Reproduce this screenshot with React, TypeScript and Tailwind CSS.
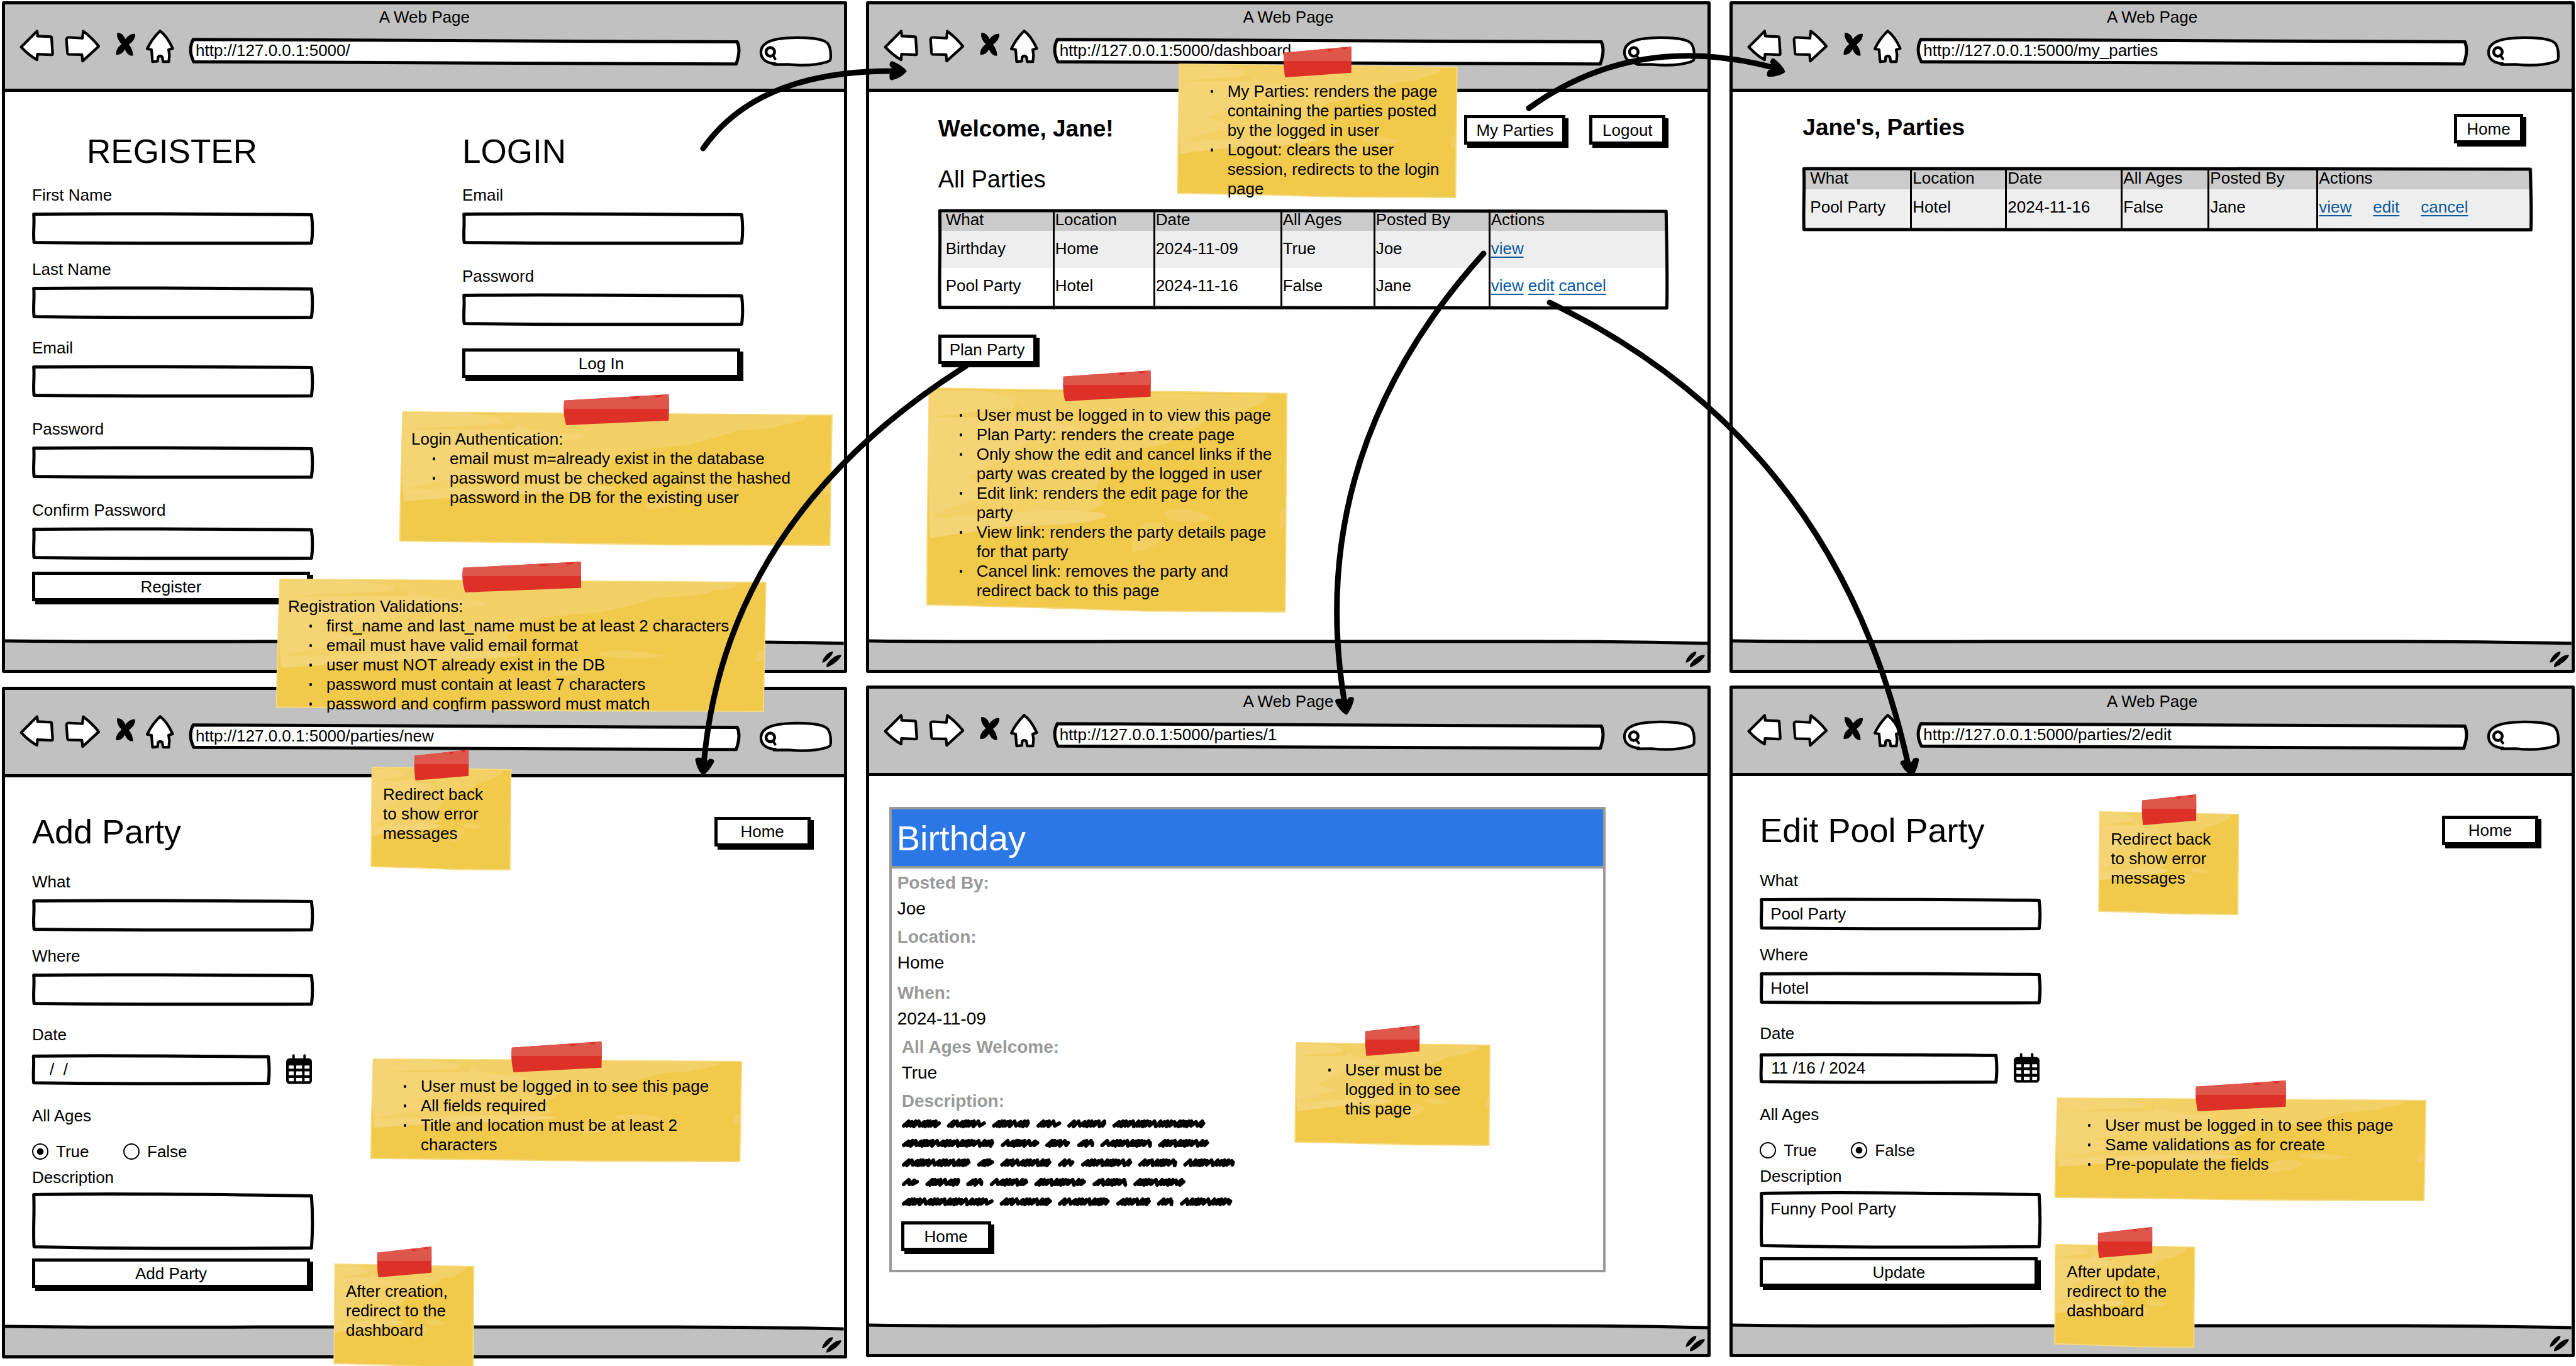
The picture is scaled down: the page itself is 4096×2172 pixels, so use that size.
import { ReactNode, useId } from "react";

/* ---------- hand-drawn outlines ---------- */

const outlineBase = "pointer-events-none absolute inset-0 h-full w-full overflow-visible";

function Outline() {
  return (
    <svg aria-hidden="true" viewBox="0 0 100 100" preserveAspectRatio="none" className={outlineBase}>
      <path
        d="M0.6 5 C30 2 70 5 99.4 7 C99.8 35 99.8 70 99.4 97 C70 98 40 99 0.7 95 C0.3 65 0.9 40 0.6 5Z"
        fill="none"
        stroke="#000"
        strokeWidth="5"
        strokeLinejoin="round"
        vectorEffect="non-scaling-stroke"
      />
    </svg>
  );
}

function TallOutline({ color }: { color: string }) {
  return (
    <svg aria-hidden="true" viewBox="0 0 100 100" preserveAspectRatio="none" className={outlineBase}>
      <path
        d="M0.2 1.2 C30 0.8 70 1.4 99.7 2 C99.8 35 99.9 70 99.8 98.6 C70 99.2 40 98.8 0.2 98 C0.1 65 0.3 40 0.2 1.2Z"
        fill="none"
        stroke={color}
        strokeWidth="5"
        strokeLinejoin="round"
        vectorEffect="non-scaling-stroke"
      />
    </svg>
  );
}

/* ---------- browser chrome ---------- */

function BackIcon() {
  return (
    <svg aria-hidden="true" viewBox="90 138 174 162" className="h-[53px] w-[57px]">
      <path d="M101 226 L178 149 Q181 160 181 173 L245 176 Q249 176 249 182 L254 258 Q254 264 248 264 L180 261 L178 288 Q140 268 101 226Z" fill="#fff" stroke="#000" strokeWidth="13" strokeLinejoin="round" />
    </svg>
  );
}

function ForwardIcon() {
  return (
    <svg aria-hidden="true" viewBox="312 138 180 168" className="h-[54px] w-[58px]">
      <path d="M323 190 Q324 179 338 180 L402 184 L406 149 Q450 182 483 224 L403 297 L400 265 L334 264 Q329 264 328 256Z" fill="#fff" stroke="#000" strokeWidth="13" strokeLinejoin="round" />
    </svg>
  );
}

function StopIcon() {
  return (
    <svg aria-hidden="true" viewBox="560 150 102 124" className="h-[40px] w-[33px]">
      <path d="M570 156 Q596 154 611 188 Q632 158 659 162 Q662 190 628 215 Q649 240 648 270 Q622 272 608 238 Q592 268 564 264 Q562 236 592 212 Q565 186 570 156Z" />
    </svg>
  );
}

function HomeIcon() {
  return (
    <svg aria-hidden="true" viewBox="708 134 144 170" className="h-[55px] w-[47px]">
      <path d="M780 144 Q815 170 842 230 L822 236 L826 262 L823 295 L795 295 L791 272 Q780 262 770 272 L768 293 L743 295 L738 236 L717 232 Q738 185 780 144Z" fill="#fff" stroke="#000" strokeWidth="13" strokeLinejoin="round" />
    </svg>
  );
}

function ResizeGrip() {
  return (
    <svg aria-hidden="true" viewBox="762 82 98 80" className="absolute top-[20px] right-[4px] h-[26px] w-[32px]">
      <path d="M765 139 Q768 122 782 106 Q798 87 816 85 Q824 90 804 113 Q778 142 765 139Z" />
      <path d="M787 161 Q782 148 808 124 Q838 98 860 102 Q856 118 832 137 Q802 160 787 161Z" />
    </svg>
  );
}

function BrowserWindow({ url, children, overlay }: { url: string; children?: ReactNode; overlay?: ReactNode }) {
  return (
    <section className="relative flex flex-1 flex-col rounded-[3px] border-[5px] border-black bg-white">
      <header className="h-[139px] border-b-[5px] border-black bg-[#c1c1c1] pt-[4px]">
        <p className="text-center leading-[32px]">A Web Page</p>
        <div className="flex items-start pt-[3px] pr-[18px] pl-[22px]">
          <button type="button" aria-label="Back"><BackIcon /></button>
          <button type="button" aria-label="Forward" className="ml-[15px]"><ForwardIcon /></button>
          <button type="button" aria-label="Stop" className="mt-[4px] ml-[23px]"><StopIcon /></button>
          <button type="button" aria-label="Home" className="ml-[15px]"><HomeIcon /></button>
          <div className="relative mt-[14px] ml-[24px] h-[44px] flex-1">
            <svg aria-hidden="true" viewBox="0 0 100 100" preserveAspectRatio="none" className={outlineBase}>
              <path d="M0.6 6 C30 5 60 12 99.5 15 Q100.2 45 99.3 95 C60 94 30 88 0.7 87 Q-0.4 45 0.6 6Z" fill="#fff" stroke="#000" strokeWidth="5" strokeLinejoin="round" vectorEffect="non-scaling-stroke" />
            </svg>
            <input type="text" aria-label="Address" defaultValue={url} className="relative block h-[40px] w-full bg-transparent pl-[9px] outline-none" />
          </div>
          <div className="relative mt-[11px] ml-[30px] h-[49px] w-[117px]">
            <svg aria-hidden="true" viewBox="458 422 360 150" preserveAspectRatio="none" className={outlineBase}>
              <path d="M538 558 C500 555 466 540 467 500 C469 450 530 432 640 431 C740 430 784 445 796 462 C806 478 810 500 808 530 C807 544 800 545 790 549 C720 570 650 566 600 561 L530 562" fill="#fff" stroke="#000" strokeWidth="13" strokeLinecap="round" strokeLinejoin="round" />
              <circle cx="513" cy="500" r="21" fill="none" stroke="#000" strokeWidth="14" />
              <path d="M526 518 L537 534" stroke="#000" strokeWidth="12" strokeLinecap="round" />
            </svg>
            <input type="search" aria-label="Search" className="relative block h-full w-full bg-transparent pr-3 pl-[32px] outline-none" />
          </div>
        </div>
      </header>
      <div className="flex-1">{children}</div>
      <footer className="relative h-[50px]">
        <svg aria-hidden="true" viewBox="0 0 100 50" preserveAspectRatio="none" className="absolute inset-0 h-full w-full">
          <path d="M0 4 H80 Q90 4 100 8 V50 H0Z" fill="#c1c1c1" />
          <path d="M0 4 Q10 6 30 5 H80 Q90 5 100 8" fill="none" stroke="#000" strokeWidth="5" vectorEffect="non-scaling-stroke" />
        </svg>
        <ResizeGrip />
      </footer>
      {overlay}
    </section>
  );
}

/* ---------- controls ---------- */

function Field({ label, value, className = "" }: { label: string; value?: string; className?: string }) {
  const id = useId();
  return (
    <div className={className}>
      <label htmlFor={id} className="block leading-[36px]">{label}</label>
      <div className="relative mt-[10px]">
        <Outline />
        <input id={id} type="text" defaultValue={value} className="relative block h-[50px] w-full bg-transparent pl-[17px] outline-none" />
      </div>
    </div>
  );
}

function Button({ children, className = "" }: { children: ReactNode; className?: string }) {
  return (
    <button type="button" className={`block h-[47px] border-[5px] border-black bg-white leading-[36px] shadow-[5px_5px_0_#000] ${className}`}>
      {children}
    </button>
  );
}

const radioClass =
  "h-[26px] w-[26px] appearance-none rounded-full border-2 border-black bg-white checked:bg-[radial-gradient(circle_closest-side,#000_44%,#fff_52%)]";

function CalendarIcon() {
  return (
    <svg aria-hidden="true" viewBox="1275 62 126 146" className="h-[48px] w-[41px]">
      <path d="M1311 68 V90 M1365 68 V90" stroke="#000" strokeWidth="12" strokeLinecap="round" />
      <rect x="1275" y="82" width="126" height="125" rx="16" />
      <path
        fill="#fff"
        d="M1288 117h24v16h-24z M1324 117h29v16h-29z M1365 117h24v16h-24z M1288 146h24v18h-24z M1324 146h29v18h-29z M1365 146h24v18h-24z M1288 178h24v16h-19q-5 0-5-5z M1324 178h29v16h-29z M1365 178h24v11q0 5-5 5h-19z"
      />
    </svg>
  );
}

type PartyFormProps = {
  title: string;
  what?: string;
  where?: string;
  date: string;
  dateClass: string;
  allAges: boolean;
  description?: string;
  submit: string;
};

function PartyForm({ title, what, where, date, dateClass, allAges, description, submit }: PartyFormProps) {
  const id = useId();
  return (
    <div className="pt-[56px] pr-[53px] pl-[43px]">
      <div className="flex h-[60px] items-center justify-between">
        <h1 className="text-[54px] leading-[60px]">{title}</h1>
        <Button className="w-[153px]">Home</Button>
      </div>
      <form className="mt-[32px] w-[447px]">
        <Field label="What" value={what} />
        <Field label="Where" value={where} className="mt-[22px]" />
        <label htmlFor={`${id}d`} className="mt-[29px] block leading-[36px]">Date</label>
        <div className="mt-[13px] flex items-center justify-between pr-[2px]">
          <div className="relative w-[378px]">
            <Outline />
            <input id={`${id}d`} type="text" defaultValue={date} className={`relative block h-[47px] w-full bg-transparent outline-none ${dateClass}`} />
          </div>
          <button type="button" aria-label="Pick a date"><CalendarIcon /></button>
        </div>
        <fieldset className="mt-[32px]">
          <legend className="leading-[36px]">All Ages</legend>
          <div className="mt-[21px] flex h-[36px] gap-[34px]">
            <label className="flex w-[111px] items-center gap-[12px]">
              <input type="radio" name={`${id}a`} defaultChecked={allAges} className={radioClass} />
              True
            </label>
            <label className="flex items-center gap-[12px]">
              <input type="radio" name={`${id}a`} defaultChecked={!allAges} className={radioClass} />
              False
            </label>
          </div>
        </fieldset>
        <label htmlFor={`${id}t`} className="mt-[5px] block leading-[36px]">Description</label>
        <div className="relative mt-[5px]">
          <Outline />
          <textarea id={`${id}t`} defaultValue={description} className="relative block h-[92px] w-full resize-none bg-transparent pt-[11px] pl-[17px] leading-[36px] outline-none" />
        </div>
        <Button className="mt-[14px] w-[442px]">{submit}</Button>
      </form>
    </div>
  );
}

/* ---------- tables ---------- */

type PartyRow = { cells: string[]; links: string[] };

const columns = ["What", "Location", "Date", "All Ages", "Posted By", "Actions"];

const cellClass = "border-l-[3px] border-black pl-px first:border-l-0 first:pl-[12px]";

function PartyTable({ widths, rows, linkGap }: { widths: string[]; rows: PartyRow[]; linkGap: string }) {
  return (
    <div className="relative">
      <table className="w-full table-fixed border-separate border-spacing-0 text-left">
        <colgroup>
          {widths.map((w, i) => <col key={i} className={w} />)}
        </colgroup>
        <thead>
          <tr className="h-[34px] bg-[#cbcbcb]">
            {columns.map((c) => (
              <th key={c} scope="col" className={`pt-px pb-[3px] leading-[30px] font-normal ${cellClass}`}>{c}</th>
            ))}
          </tr>
        </thead>
        <tbody>
          {rows.map((row, r) => (
            <tr key={r} className="group h-[59px] odd:bg-[#eeeeee] last:h-[66px]">
              {row.cells.map((c, i) => (
                <td key={i} className={`pb-[3px] group-last:pb-[10px] ${cellClass}`}>{c}</td>
              ))}
              <td className={`pb-[3px] group-last:pb-[10px] ${cellClass}`}>
                <div className={`flex ${linkGap}`}>
                  {row.links.map((l) => (
                    <a key={l} href={`#${l}`} className="text-[#0b5a9e] underline decoration-2 underline-offset-4">{l}</a>
                  ))}
                </div>
              </td>
            </tr>
          ))}
        </tbody>
      </table>
      <TallOutline color="#000" />
    </div>
  );
}

/* ---------- sticky notes ---------- */

function Note({ place, title, text, items }: { place: string; title?: string; text?: string; items?: string[] }) {
  return (
    <aside className={`absolute z-10 ${place}`}>
      <svg aria-hidden="true" viewBox="0 0 100 100" preserveAspectRatio="none" className={outlineBase}>
        <path d="M0.8 0 L99.7 2.4 L99.2 100 L60 99.6 L30 98 L0.1 96.8 Q0.3 50 0.8 0Z" fill="#f1c94b" stroke="#f6da80" strokeWidth="2" vectorEffect="non-scaling-stroke" />
        <path d="M0.9 1 L94 3 Q94 7 89 9 L86 12 L78 14 L72 20 L66 25 L54 29 Q48 38 47 44 L49 52 L40 58 L1 66Z" fill="#f3d166" />
        <path d="M0.8 1 L15 1 Q26 4 28 11 Q31 15 42 17 Q44 20 38 21 L28 24 Q24 30 11 40 Q16 43 20 47 Q12 50 3 56 Q1 58 4 58 L30 55 Q48 54 50 57 Q46 61 22 62 L1 67 Q0.3 40 0.8 1Z" fill="#f4d474" />
        <path d="M18 2 Q25 5 24 9 Q18 10 1 13 L26 13 Q28 11 26 7Z M57 73 Q56 64 61 60 Q68 60 66 66 Q62 73 57 73Z M66 55 Q72 52 79 58 Q74 62 66 58Z M98 55 Q99 50 99.4 58 Q99 64 97.6 62Z" fill="#f3cf62" />
      </svg>
      <svg aria-hidden="true" viewBox="0 0 100 100" preserveAspectRatio="none" className="absolute -top-[28px] left-1/2 h-[49px] w-[24.3%] min-w-[87px] -translate-x-1/2">
        <path d="M0.5 20 L99.7 0 L100 45 L99.7 85 L2.5 100 Q0.5 80 0 48Z" fill="#dd3027" />
        <path d="M0.5 20 L99.7 0 L100 47 H0Z" fill="#df564b" />
        <path d="M63 11 Q68 5 73 8 Q71 15 66 15Z M86 5 Q90 0 94 3 Q93 9 88 9Z" fill="#dd3027" />
      </svg>
      <div className="relative pt-[28px] pl-[19px] leading-[31px] whitespace-pre">
        {title && <h3>{title}</h3>}
        {text && <p>{text}</p>}
        {items && (
          <ul className="pl-[61px]">
            {items.map((item) => (
              <li key={item} className="relative before:absolute before:top-[13px] before:-left-[27px] before:h-[5px] before:w-[4px] before:rounded-full before:bg-black before:content-['']">{item}</li>
            ))}
          </ul>
        )}
      </div>
    </aside>
  );
}

/* ---------- scribbled filler text ---------- */

const scribbleLines = [
  [[77, 148], [159, 230], [241, 310], [322, 367], [378, 449], [460, 629]],
  [[77, 245], [257, 327], [338, 383], [396, 427], [438, 532], [543, 636]],
  [[77, 202], [214, 245], [256, 349], [361, 391], [403, 496], [507, 578], [589, 683]],
  [[77, 108], [120, 183], [194, 225], [237, 307], [318, 412], [424, 486], [498, 593]],
  [[77, 244], [255, 350], [361, 455], [467, 530], [541, 571], [583, 678]],
];

const scribbleSteps = [5, 6, 5, 9, 5, 4, 5, 4, 7, 10, 6];

function scribblePath() {
  let d = "";
  scribbleLines.forEach((line, row) => {
    const y = 11 + row * 31;
    line.forEach(([from, to], w) => {
      const end = (to - 77) * 0.874 - 3;
      let x = (from - 77) * 0.874 + 3;
      let k = row + w * 2;
      d += `M${x.toFixed(1)} ${y + 3}`;
      while (x + 8 < end) {
        const lift = k % 3;
        d += `L${(x + 8).toFixed(1)} ${y - 4 + (lift === 1 ? 1 : 0)}`;
        x += scribbleSteps[k % scribbleSteps.length];
        d += `L${x.toFixed(1)} ${y + 3 + (lift === 2 ? 1 : 0)}`;
        k += 1;
      }
      d += `L${end.toFixed(1)} ${y - 1}`;
    });
  });
  return d;
}

function Scribbles() {
  return (
    <svg role="img" aria-label="Party description" viewBox="0 0 536 150" className="h-[150px] w-[536px]">
      <path d={scribblePath()} fill="none" stroke="#000" strokeWidth="6" strokeLinecap="round" strokeLinejoin="round" />
    </svg>
  );
}

/* ---------- flow arrows ---------- */

const arrows = [
  { line: "M1118 236 Q1205 112 1420 113", head: "translate(1441 113) rotate(-90)" },
  { line: "M2431 172 Q2600 50 2818 107", head: "translate(2838 114) rotate(-75)" },
  { line: "M1536 582 Q1153 824 1119 1215", head: "translate(1118 1232) rotate(5)" },
  { line: "M2359 403 Q2072 721 2138 1118", head: "translate(2141 1136) rotate(-9)" },
  { line: "M2464 481 Q2920 700 3034 1215", head: "translate(3041 1233) rotate(-13)" },
];

function FlowArrows() {
  return (
    <svg aria-hidden="true" viewBox="0 0 4096 2172" preserveAspectRatio="none" className="pointer-events-none absolute inset-0 z-20 h-full w-full">
      {arrows.map((a) => (
        <g key={a.line} stroke="#000" strokeLinecap="round" strokeLinejoin="round">
          <path d={a.line} fill="none" strokeWidth="9" />
          <path transform={a.head} d="M0 -1 Q-9 -8 -13 -23 Q-13 -26 -6 -25 L-2 -20 L4 -20 L9 -25 Q15 -25 14 -22 Q8 -8 0 -1Z" strokeWidth="3" />
        </g>
      ))}
    </svg>
  );
}

/* ---------- screens ---------- */

function AuthScreen() {
  return (
    <BrowserWindow
      url="http://127.0.0.1:5000/"
      overlay={
        <>
          <Note
            place="top-[648px] left-[627px] h-[212px] w-[690px]"
            title="Login Authentication:"
            items={["email must m=already exist in the database", "password must be checked against the hashed\npassword in the DB for the existing user"]}
          />
          <Note
            place="top-[914px] left-[431px] h-[210px] w-[781px]"
            title="Registration Validations:"
            items={[
              "first_name and last_name must be at least 2 characters",
              "email must have valid email format",
              "user must NOT already exist in the DB",
              "password must contain at least 7 characters",
              "password and confirm password must match",
            ]}
          />
        </>
      }
    >
      <div className="flex gap-[237px] pt-[65px] pl-[43px]">
        <form className="w-[447px]">
          <h1 className="pl-[87px] text-[53px] leading-[60px]">REGISTER</h1>
          <Field label="First Name" className="mt-[21px]" />
          <Field label="Last Name" className="mt-[22px]" />
          <Field label="Email" className="mt-[29px]" />
          <Field label="Password" className="mt-[33px]" />
          <Field label="Confirm Password" className="mt-[33px]" />
          <Button className="mt-[20px] w-[442px]">Register</Button>
        </form>
        <form className="w-[447px]">
          <h1 className="text-[53px] leading-[60px]">LOGIN</h1>
          <Field label="Email" className="mt-[21px]" />
          <Field label="Password" className="mt-[33px]" />
          <Button className="mt-[37px] w-[442px]">Log In</Button>
        </form>
      </div>
    </BrowserWindow>
  );
}

function DashboardScreen() {
  return (
    <BrowserWindow
      url="http://127.0.0.1:5000/dashboard"
      overlay={
        <>
          <Note
            place="top-[95px] left-[490px] h-[212px] w-[446px]"
            items={["My Parties: renders the page\ncontaining the parties posted\nby the logged in user", "Logout: clears the user\nsession, redirects to the login\npage"]}
          />
          <Note
            place="top-[610px] left-[91px] h-[356px] w-[575px]"
            items={[
              "User must be logged in to view this page",
              "Plan Party: renders the create page",
              "Only show the edit and cancel links if the\nparty was created by the logged in user",
              "Edit link: renders the edit page for the\nparty",
              "View link: renders the party details page\nfor that party",
              "Cancel link: removes the party and\nredirect back to this page",
            ]}
          />
        </>
      }
    >
      <div className="pt-[37px] pr-[63px] pl-[110px]">
        <div className="flex items-center justify-between pr-[4px]">
          <h1 className="pb-[4px] text-[37px] leading-[43px] font-bold">Welcome, Jane!</h1>
          <div className="flex gap-[38px]">
            <Button className="w-[161px]">My Parties</Button>
            <Button className="w-[121px]">Logout</Button>
          </div>
        </div>
        <h2 className="mt-[30px] mb-[23px] text-[38px] leading-[50px]">All Parties</h2>
        <PartyTable
          widths={["w-[182px]", "w-[160px]", "w-[202px]", "w-[148px]", "w-[183px]", ""]}
          linkGap="gap-[7px]"
          rows={[
            { cells: ["Birthday", "Home", "2024-11-09", "True", "Joe"], links: ["view"] },
            { cells: ["Pool Party", "Hotel", "2024-11-16", "False", "Jane"], links: ["view", "edit", "cancel"] },
          ]}
        />
        <Button className="mt-[40px] w-[156px]">Plan Party</Button>
      </div>
    </BrowserWindow>
  );
}

function MyPartiesScreen() {
  return (
    <BrowserWindow url="http://127.0.0.1:5000/my_parties">
      <div className="pt-[35px] pr-[62px] pl-[111px]">
        <div className="mb-[39px] flex items-center justify-between pr-[15px]">
          <h1 className="pb-[4px] text-[37px] leading-[43px] font-bold">Jane's, Parties</h1>
          <Button className="w-[110px]">Home</Button>
        </div>
        <PartyTable
          widths={["w-[171px]", "w-[151px]", "w-[184px]", "w-[138px]", "w-[173px]", ""]}
          linkGap="gap-[34px]"
          rows={[{ cells: ["Pool Party", "Hotel", "2024-11-16", "False", "Jane"], links: ["view", "edit", "cancel"] }]}
        />
      </div>
    </BrowserWindow>
  );
}

function AddPartyScreen() {
  return (
    <BrowserWindow
      url="http://127.0.0.1:5000/parties/new"
      overlay={
        <>
          <Note place="top-[123px] left-[582px] h-[163px] w-[223px]" text={"Redirect back\nto show error\nmessages"} />
          <Note
            place="top-[587px] left-[581px] h-[163px] w-[592px]"
            items={["User must be logged in to see this page", "All fields required", "Title and location must be at least 2\ncharacters"]}
          />
          <Note place="top-[913px] left-[523px] h-[163px] w-[223px]" text={"After creation,\nredirect to the\ndashboard"} />
        </>
      }
    >
      <PartyForm title="Add Party" date="/  /" dateClass="pl-[28px] whitespace-pre" allAges submit="Add Party" />
    </BrowserWindow>
  );
}

const details = [
  { label: "Posted By:", value: "Joe", className: "pl-[9px]" },
  { label: "Location:", value: "Home", className: "pl-[9px] mt-[9px]" },
  { label: "When:", value: "2024-11-09", className: "pl-[9px] mt-[12px]" },
  { label: "All Ages Welcome:", value: "True", className: "pl-[16px] mt-[9px]" },
];

function DetailsScreen() {
  return (
    <BrowserWindow
      url="http://127.0.0.1:5000/parties/1"
      overlay={<Note place="top-[563px] left-[677px] h-[163px] w-[311px]" items={["User must be\nlogged in to see\nthis page"]} />}
    >
      <div className="pt-[49px] pr-[162px] pl-[32px]">
        <article className="h-[740px] border-4 border-[#999999]">
          <h1 className="h-[94px] border-b-4 border-[#999999] bg-[#2b77e5] pl-[8px] text-[56px] leading-[92px] text-white">Birthday</h1>
          <dl className="pt-[5px] text-[28px] leading-[36px]">
            {details.map((d) => (
              <div key={d.label} className={d.className}>
                <dt className="font-bold text-[#999999]">{d.label}</dt>
                <dd className="mt-[5px]">{d.value}</dd>
              </div>
            ))}
            <div className="mt-[9px] pl-[16px]">
              <dt className="font-bold text-[#999999]">Description:</dt>
              <dd className="mt-[7px]"><Scribbles /></dd>
            </div>
          </dl>
          <Button className="mt-[16px] ml-[15px] w-[143px]">Home</Button>
        </article>
      </div>
    </BrowserWindow>
  );
}

function EditPartyScreen() {
  return (
    <BrowserWindow
      url="http://127.0.0.1:5000/parties/2/edit"
      overlay={
        <>
          <Note place="top-[196px] left-[582px] h-[163px] w-[223px]" text={"Redirect back\nto show error\nmessages"} />
          <Note
            place="top-[651px] left-[512px] h-[163px] w-[592px]"
            items={["User must be logged in to see this page", "Same validations as for create", "Pre-populate the fields"]}
          />
          <Note place="top-[884px] left-[512px] h-[163px] w-[223px]" text={"After update,\nredirect to the\ndashboard"} />
        </>
      }
    >
      <PartyForm
        title="Edit Pool Party"
        what="Pool Party"
        where="Hotel"
        date="11 /16 / 2024"
        dateClass="pl-[18px]"
        allAges={false}
        description="Funny Pool Party"
        submit="Update"
      />
    </BrowserWindow>
  );
}

export default function App() {
  return (
    <main className="relative grid min-h-screen grid-cols-3 gap-x-[30px] overflow-hidden bg-white pt-[2px] pr-[2px] pb-[12px] pl-[3px] font-['Liberation_Sans',Arial,sans-serif] text-[26px] leading-[36px] text-black">
      <div className="flex flex-col gap-[22px]">
        <AuthScreen />
        <AddPartyScreen />
      </div>
      <div className="flex flex-col gap-[20px] pb-[2px]">
        <DashboardScreen />
        <DetailsScreen />
      </div>
      <div className="flex flex-col gap-[20px] pb-[2px]">
        <MyPartiesScreen />
        <EditPartyScreen />
      </div>
      <FlowArrows />
    </main>
  );
}
